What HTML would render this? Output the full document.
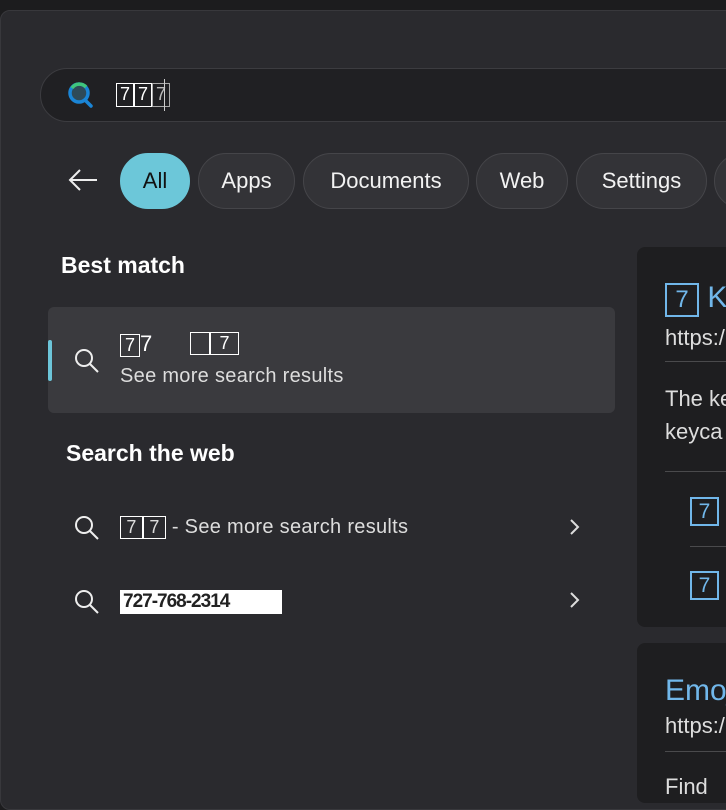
<!DOCTYPE html>
<html><head><style>
*{margin:0;padding:0;box-sizing:border-box}
body{width:726px;height:787px;overflow:hidden;background:#1c1c1e;font-family:"Segoe UI","Liberation Sans",sans-serif;color:#fff;position:relative;white-space:nowrap}
.panel{position:absolute;left:0;top:10px;width:760px;height:800px;background:#2a2a2e;border-radius:10px;border:1px solid #38383c}
.abs{position:absolute}
.box{display:inline-block;border:1.5px solid #fff;width:20px;height:23px;text-align:center;font-size:18px;line-height:20px;vertical-align:middle}
.pill{position:absolute;top:153px;height:56px;border-radius:28px;background:#333337;border:1px solid #454549;font-size:22px;line-height:54px;text-align:center;color:#f2f2f2}
.sb{position:absolute;left:40px;top:68px;width:720px;height:54px;border-radius:27px;background:#202023;border:1px solid #3c3c40}
.card{position:absolute;background:#1e1e20;border-radius:8px}
.bl{color:#71b7ea}
.bb{display:inline-block;border:2px solid #71b7ea;text-align:center}
.hr{position:absolute;height:1px;background:#4a4a4c}
</style></head><body>
<div class="panel"></div>
<div class="sb"></div>
<svg class="abs" style="left:66px;top:80px" width="30" height="30" viewBox="0 0 30 30"><circle cx="13" cy="13" r="9" fill="#2e4a58" stroke="#1a85d6" stroke-width="3.5"/><path d="M6 8 A9 9 0 0 1 20 7" stroke="#3fc57c" stroke-width="3.5" fill="none"/><path d="M19 20 L25 26" stroke="#1a85d6" stroke-width="3.5" stroke-linecap="round"/></svg>
<div class="abs" style="left:116px;top:83px;font-size:0"><span class="box" style="width:18px;height:24px">7</span><span class="box" style="width:18px;height:24px">7</span><span class="box" style="width:18px;height:24px;color:#bbb;border-color:#aaa">7</span></div>
<div class="abs" style="left:164px;top:79px;width:1px;height:32px;background:#ccc"></div>
<svg class="abs" style="left:66px;top:166px" width="34" height="28" viewBox="0 0 34 28"><path d="M4 14 H31 M14 4 L4 14 L14 24" stroke="#eee" stroke-width="2" fill="none"/></svg>
<div class="pill" style="left:120px;width:70px;background:#6cc7d9;border-color:#6cc7d9;color:#111">All</div>
<div class="pill" style="left:198px;width:97px">Apps</div>
<div class="pill" style="left:303px;width:166px">Documents</div>
<div class="pill" style="left:476px;width:92px">Web</div>
<div class="pill" style="left:576px;width:131px">Settings</div>
<div class="pill" style="left:714px;width:60px"></div>
<div class="abs" style="left:61px;top:252px;font-size:23px;font-weight:600">Best match</div>
<div class="abs" style="left:48px;top:307px;width:567px;height:106px;background:#3a3a3e;border-radius:6px"></div>
<div class="abs" style="left:48px;top:340px;width:4px;height:41px;background:#6cc5d9;border-radius:2px"></div>
<svg class="abs" style="left:72px;top:346px" width="30" height="30" viewBox="0 0 30 30"><circle cx="12" cy="12" r="8" stroke="#eee" stroke-width="2" fill="none"/><path d="M18 18 L26 26" stroke="#eee" stroke-width="2"/></svg>
<div class="abs" style="left:120px;top:332px;font-size:22px;line-height:24px"><span class="box">7</span>7</div>
<div class="abs" style="left:190px;top:332px;font-size:0"><span class="box"></span><span class="box" style="width:29px">7</span></div>
<div class="abs" style="left:120px;top:365px;font-size:20px;color:#ddd;letter-spacing:0.3px">See more search results</div>
<div class="abs" style="left:66px;top:440px;font-size:23px;font-weight:600">Search the web</div>
<svg class="abs" style="left:72px;top:513px" width="30" height="30" viewBox="0 0 30 30"><circle cx="12" cy="12" r="8" stroke="#eee" stroke-width="2" fill="none"/><path d="M18 18 L26 26" stroke="#eee" stroke-width="2"/></svg>
<div class="abs" style="left:120px;top:515px;font-size:20px;color:#ddd;line-height:24px;letter-spacing:0.3px"><span class="box" style="width:23px">7</span><span class="box" style="width:23px">7</span> - See more search results</div>
<svg class="abs" style="left:566px;top:517px" width="18" height="20"><path d="M5 3 L12 10 L5 17" stroke="#ddd" stroke-width="2" fill="none"/></svg>
<svg class="abs" style="left:72px;top:587px" width="30" height="30" viewBox="0 0 30 30"><circle cx="12" cy="12" r="8" stroke="#eee" stroke-width="2" fill="none"/><path d="M18 18 L26 26" stroke="#eee" stroke-width="2"/></svg>
<div class="abs" style="left:120px;top:590px;width:162px;font-size:19px;font-weight:700;letter-spacing:-1px;line-height:22px;background:#fff;color:#222;padding:0 2px;border:1px solid #fff">727-768-2314</div>
<svg class="abs" style="left:566px;top:590px" width="18" height="20"><path d="M5 3 L12 10 L5 17" stroke="#ddd" stroke-width="2" fill="none"/></svg>
<div class="card" style="left:637px;top:247px;width:120px;height:380px"></div>
<div class="abs bl" style="left:665px;top:280px;font-size:30px;line-height:36px"><span class="bb" style="width:34px;height:34px;font-size:24px;line-height:30px">7</span> K</div>
<div class="abs" style="left:665px;top:325px;font-size:22px;color:#ddd">https:/</div>
<div class="hr" style="left:665px;top:361px;width:70px"></div>
<div class="abs" style="left:665px;top:382px;font-size:22px;color:#ddd;line-height:33px">The ke<br>keyca</div>
<div class="hr" style="left:665px;top:471px;width:70px"></div>
<div class="abs" style="left:690px;top:497px"><span class="bb bl" style="width:29px;height:29px;font-size:21px;line-height:25px">7</span></div>
<div class="hr" style="left:690px;top:546px;width:40px"></div>
<div class="abs" style="left:690px;top:571px"><span class="bb bl" style="width:29px;height:29px;font-size:21px;line-height:25px">7</span></div>
<div class="card" style="left:637px;top:643px;width:120px;height:160px"></div>
<div class="abs bl" style="left:665px;top:674px;font-size:30px">Emoj</div>
<div class="abs" style="left:665px;top:713px;font-size:22px;color:#ddd">https:/</div>
<div class="hr" style="left:665px;top:751px;width:70px"></div>
<div class="abs" style="left:665px;top:774px;font-size:22px;color:#ddd">Find</div>
</body></html>
